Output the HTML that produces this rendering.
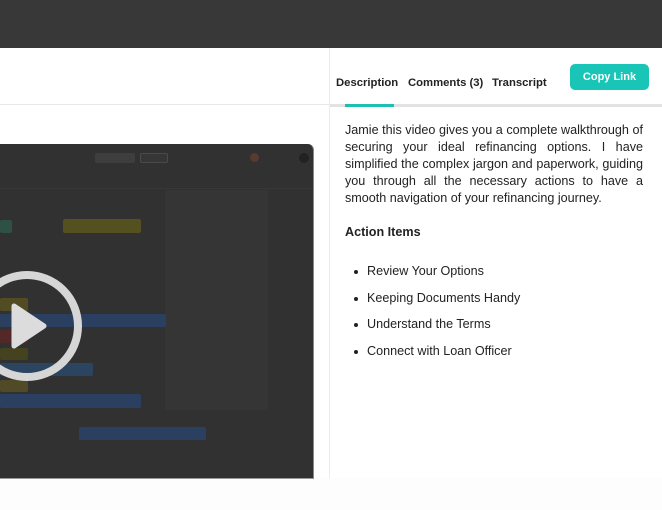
<!DOCTYPE html>
<html><head><style>
*{margin:0;padding:0;box-sizing:border-box}
body{width:662px;height:510px;overflow:hidden;background:#fdfdfd;font-family:"Liberation Sans",sans-serif;position:relative}
.top{position:absolute;left:0;top:0;width:662px;height:48px;background:#383838}
.left{position:absolute;left:0;top:48px;width:329px;height:430px;background:#fff}
.hline{position:absolute;left:0;top:104px;width:329px;height:1px;background:#e8e8e8}
.vsep{position:absolute;left:329px;top:48px;width:1px;height:430px;background:#ececec}
.right{position:absolute;left:330px;top:48px;width:332px;height:430px;background:#fff}
.tabs{position:absolute;top:77px;font-size:11.3px;font-weight:bold;color:#222}
.tabbar{position:absolute;left:330px;top:104px;width:332px;height:3px;background:#e2e2e2}
.tabu{position:absolute;left:345px;top:104px;width:49px;height:3px;background:#1cbfb2}
.btn{position:absolute;left:570px;top:64px;width:79px;height:26px;background:#18c5b6;border-radius:5px;color:#fff;font-weight:bold;font-size:11px;text-align:center;line-height:26px}
.video{position:absolute;left:0;top:144px;width:314px;height:335px;background:#313131;border-top-right-radius:6px;overflow:hidden;border-bottom:1px solid #999;border-right:1px solid #888}
.b{position:absolute;border-radius:2px}
.desc{position:absolute;left:345px;top:122px;width:298px;font-size:12.6px;line-height:17px;color:#222;text-align:justify}
.ai{position:absolute;left:345px;top:225px;font-size:12.6px;font-weight:bold;color:#222}
ul{position:absolute;left:367px;top:264px;font-size:12.6px;color:#222;list-style:none}
li{height:26.5px;position:relative}
li:before{content:"";position:absolute;left:-13px;top:6px;width:4px;height:4px;border-radius:50%;background:#222}
</style></head><body>
<div class="top"></div>
<div class="left"></div>
<div class="hline"></div>
<div class="right"></div>
<div class="vsep"></div>
<div class="tabs" style="left:336px">Description</div>
<div class="tabs" style="left:408px">Comments (3)</div>
<div class="tabs" style="left:492px">Transcript</div>
<div class="tabbar"></div><div class="tabu"></div>
<div class="btn">Copy Link</div>
<div class="video">
 <div class="b" style="left:0;top:44px;width:314px;height:1px;background:#383838"></div>
 <div class="b" style="left:165px;top:46px;width:103px;height:220px;background:#353535"></div>
 <div class="b" style="left:95px;top:9px;width:40px;height:10px;background:#3e3e3e"></div>
 <div class="b" style="left:140px;top:9px;width:28px;height:10px;background:#363636;border:1px solid #4a4a4a"></div>
 <div class="b" style="left:250px;top:9px;width:9px;height:9px;border-radius:50%;background:#5a3a30"></div>
 <div class="b" style="left:299px;top:9px;width:10px;height:10px;border-radius:50%;background:#222"></div>
 <div class="b" style="left:0;top:76px;width:12px;height:13px;background:#2f5044"></div>
 <div class="b" style="left:63px;top:75px;width:78px;height:14px;background:#55501f"></div>
 <div class="b" style="left:0;top:154px;width:28px;height:13px;background:#524c22"></div>
 <div class="b" style="left:0;top:170px;width:166px;height:13px;background:#2b4060"></div>
 <div class="b" style="left:0;top:186px;width:28px;height:13px;background:#552828"></div>
 <div class="b" style="left:0;top:204px;width:28px;height:12px;background:#454220"></div>
 <div class="b" style="left:0;top:219px;width:93px;height:13px;background:#2b4560"></div>
 <div class="b" style="left:0;top:236px;width:28px;height:12px;background:#504a26"></div>
 <div class="b" style="left:0;top:250px;width:141px;height:14px;background:#2b4060"></div>
 <div class="b" style="left:79px;top:283px;width:127px;height:13px;background:#2b4060"></div>
 <svg style="position:absolute;left:-30px;top:126px" width="120" height="115" viewBox="0 0 120 115"><circle cx="57" cy="56" r="51" fill="none" stroke="#d6d6d6" stroke-width="8"/><path d="M44 36 L74 56 L44 76 Z" fill="#dcdcdc" stroke="#dcdcdc" stroke-width="5" stroke-linejoin="round"/></svg>
</div>
<div class="desc">Jamie this video gives you a complete walkthrough of securing your ideal refinancing options. I have simplified the complex jargon and paperwork, guiding you through all the necessary actions to have a smooth navigation of your refinancing journey.</div>
<div class="ai">Action Items</div>
<ul><li>Review Your Options</li><li>Keeping Documents Handy</li><li>Understand the Terms</li><li>Connect with Loan Officer</li></ul>
</body></html>
